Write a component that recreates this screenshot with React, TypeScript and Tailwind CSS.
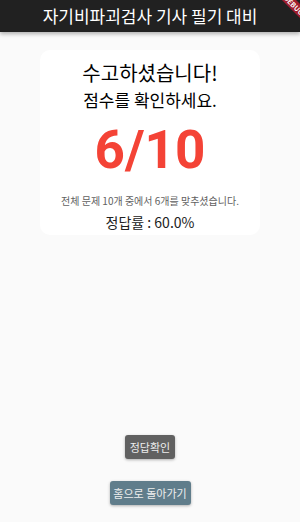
import React from "react";

export default function App() {
  const font = { fontFamily: '"Noto Sans CJK KR", "Noto Sans", Roboto, sans-serif' };
  return (
    <div className="relative w-[300px] h-[522px] bg-[#fafafa] overflow-hidden flex flex-col" style={font}>
      <div className="h-[32px] bg-[#212121] flex items-center justify-center pb-[2px] shadow-[0_2px_4px_rgba(0,0,0,0.3)] z-10">
        <span className="text-white text-[17px] leading-none">자기비파괴검사 기사 필기 대비</span>
      </div>
      <div className="flex flex-col items-center pt-[18px] flex-1">
        <div className="w-[220px] h-[185px] bg-white rounded-[10px] flex flex-col items-center pt-[10px]">
          <div className="text-[20px] leading-[26px] text-black">수고하셨습니다!</div>
          <div className="text-[17px] leading-[28px] text-black">점수를 확인하세요.</div>
          <div className="text-[53px] leading-[60px] font-bold text-[#f44336] mt-[6px]" style={{ fontFamily: "Roboto, sans-serif" }}>6/10</div>
          <div className="text-[10px] leading-[14px] text-[#616161] mt-[14px]">전체 문제 10개 중에서 6개를 맞추셨습니다.</div>
          <div className="text-[14px] leading-[20px] text-[#212121] mt-[4px]">정답률 : 60.0%</div>
        </div>
        <div className="flex-1" />
        <button className="w-[50px] h-[24px] bg-[#616161] text-[#eeeeee] text-[11px] rounded-[3px] shadow-[0_1px_3px_rgba(0,0,0,0.3)]">정답확인</button>
        <button className="mt-[22px] mb-[17px] w-[81px] h-[24px] bg-[#607d8b] text-[#eeeeee] text-[11px] rounded-[3px] shadow-[0_1px_3px_rgba(0,0,0,0.3)]">홈으로 돌아가기</button>
      </div>
      <div className="absolute top-[0px] right-[-24px] w-[60px] h-[10px] bg-[#a01d2d] rotate-45 flex items-center justify-center z-20">
        <span className="text-white text-[7px] font-bold leading-none">DEBUG</span>
      </div>
    </div>
  );
}
